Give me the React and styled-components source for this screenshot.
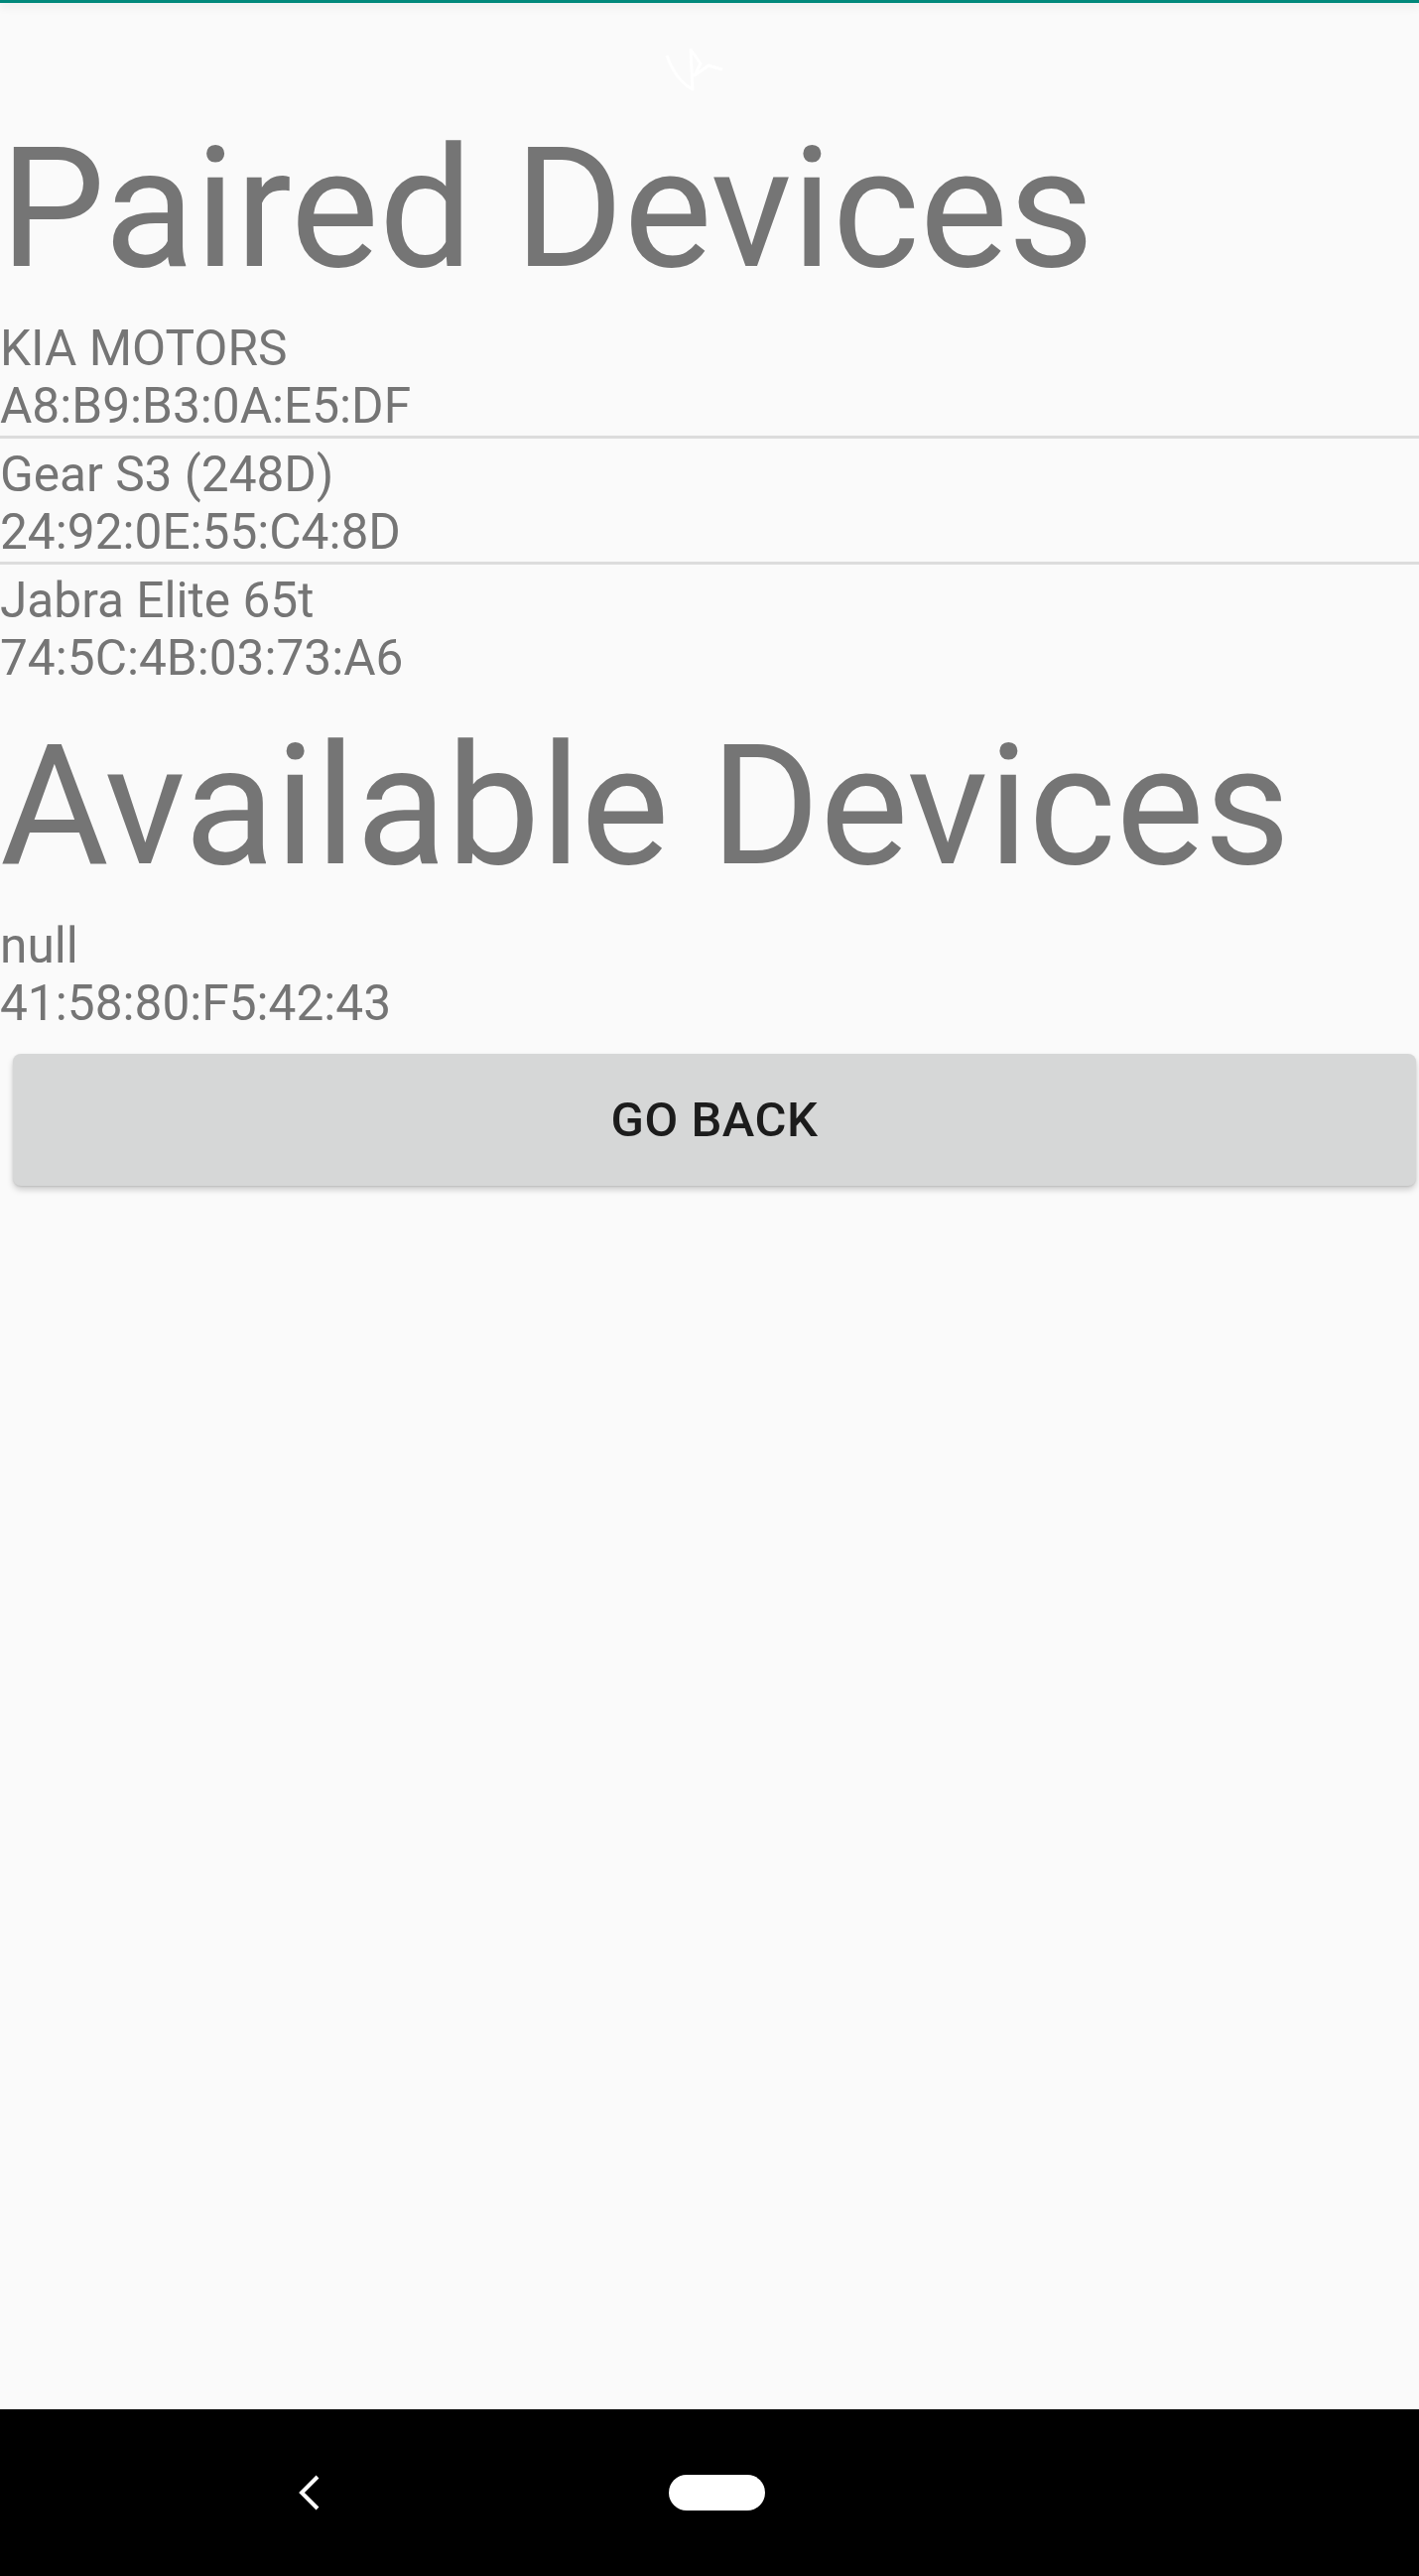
import React from 'react';
import styled, { createGlobalStyle } from 'styled-components';

const GlobalStyle = createGlobalStyle`
    html, body {
        margin: 0;
        padding: 0;
        background: #fafafa;
    }
    body {
        font-family: Roboto, "Liberation Sans", sans-serif;
    }
`;

const Screen = styled.div`
    min-height: 100vh;
    display: flex;
    flex-direction: column;
    background: #fafafa;
    position: relative;
    overflow: hidden;
`;

const TopBar = styled.div`
    height: 3px;
    background: #00877a;
    box-shadow: 0 3px 10px rgba(0, 0, 0, 0.13);
    position: relative;
    z-index: 1;
`;

const Content = styled.main`
    flex: 1;
    padding-top: 109px;
`;

const Heading = styled.h1`
    margin: ${ props => props.top || 0 }px 0 6px 0;
    font-family: Roboto, "Liberation Sans", sans-serif;
    font-weight: 400;
    font-size: 168px;
    line-height: normal;
    color: #757575;
    white-space: nowrap;
`;

const DeviceList = styled.ul`
    list-style-type: none;
    margin: 0;
    padding: 0;
`;

const DeviceItem = styled.li`
    padding: 8px 0 1px 0;
    border-bottom: 3px solid #dcdcdc;
    &:last-child {
        border-bottom: none;
    }
`;

const DeviceLine = styled.div`
    font-size: 49.6px;
    line-height: 57.5px;
    color: #757575;
`;

const Button = styled.button`
    display: flex;
    align-items: center;
    justify-content: center;
    width: 1414px;
    height: 133px;
    margin: ${ props => props.top }px 0 0 13px;
    border: none;
    border-radius: 8px;
    background: #d6d7d7;
    box-shadow: 0 4px 6px rgba(0, 0, 0, 0.18), 0 1px 2px rgba(0, 0, 0, 0.1);
    font-family: Roboto, "Liberation Sans", sans-serif;
    font-weight: 500;
    font-size: 49px;
    letter-spacing: 0.5px;
    color: rgba(0, 0, 0, 0.87);
    text-transform: uppercase;
    padding: 0;
`;

const NavBar = styled.nav`
    height: 168px;
    background: #000;
    display: flex;
    align-items: center;
    padding-left: 301px;
    gap: 351px;
`;

const HomePill = styled.div`
    width: 97px;
    height: 36px;
    border-radius: 18px;
    background: #fff;
`;

const TouchMark = styled.svg`
    position: absolute;
    top: 48px;
    left: 670px;
`;

const paired = [
    { name: 'KIA MOTORS', address: 'A8:B9:B3:0A:E5:DF' },
    { name: 'Gear S3 (248D)', address: '24:92:0E:55:C4:8D' },
    { name: 'Jabra Elite 65t', address: '74:5C:4B:03:73:A6' },
];

const available = [
    { name: 'null', address: '41:58:80:F5:42:43' },
];

const Devices = ({ items }) => (
    <DeviceList>
        { items.map(d => (
            <DeviceItem key={ d.address }>
                <DeviceLine>{ d.name }</DeviceLine>
                <DeviceLine>{ d.address }</DeviceLine>
            </DeviceItem>
        )) }
    </DeviceList>
);

const App = () => {
    return (
        <React.Fragment>
            <GlobalStyle />
            <Screen>
                <TopBar />
                <TouchMark width="70" height="60" viewBox="0 0 70 60">
                    <path d="M2 8 C8 24 16 36 28 42 L26 2 L36 16 L30 28 L44 18 L58 22"
                        fill="none" stroke="#ffffff" strokeWidth="3" strokeLinejoin="round" />
                </TouchMark>
                <Content>
                    <Heading>Paired Devices</Heading>
                    <Devices items={ paired } />
                    <Heading top={ 21 }>Available Devices</Heading>
                    <Devices items={ available } />
                    <Button top={ 21 }>Go Back</Button>
                </Content>
                <NavBar>
                    <svg width="22" height="36" viewBox="0 0 22 36">
                        <polyline points="19,2 3,18 19,34" fill="none" stroke="#fff" strokeWidth="4" />
                    </svg>
                    <HomePill />
                </NavBar>
            </Screen>
        </React.Fragment>
    );
};

export default App;
